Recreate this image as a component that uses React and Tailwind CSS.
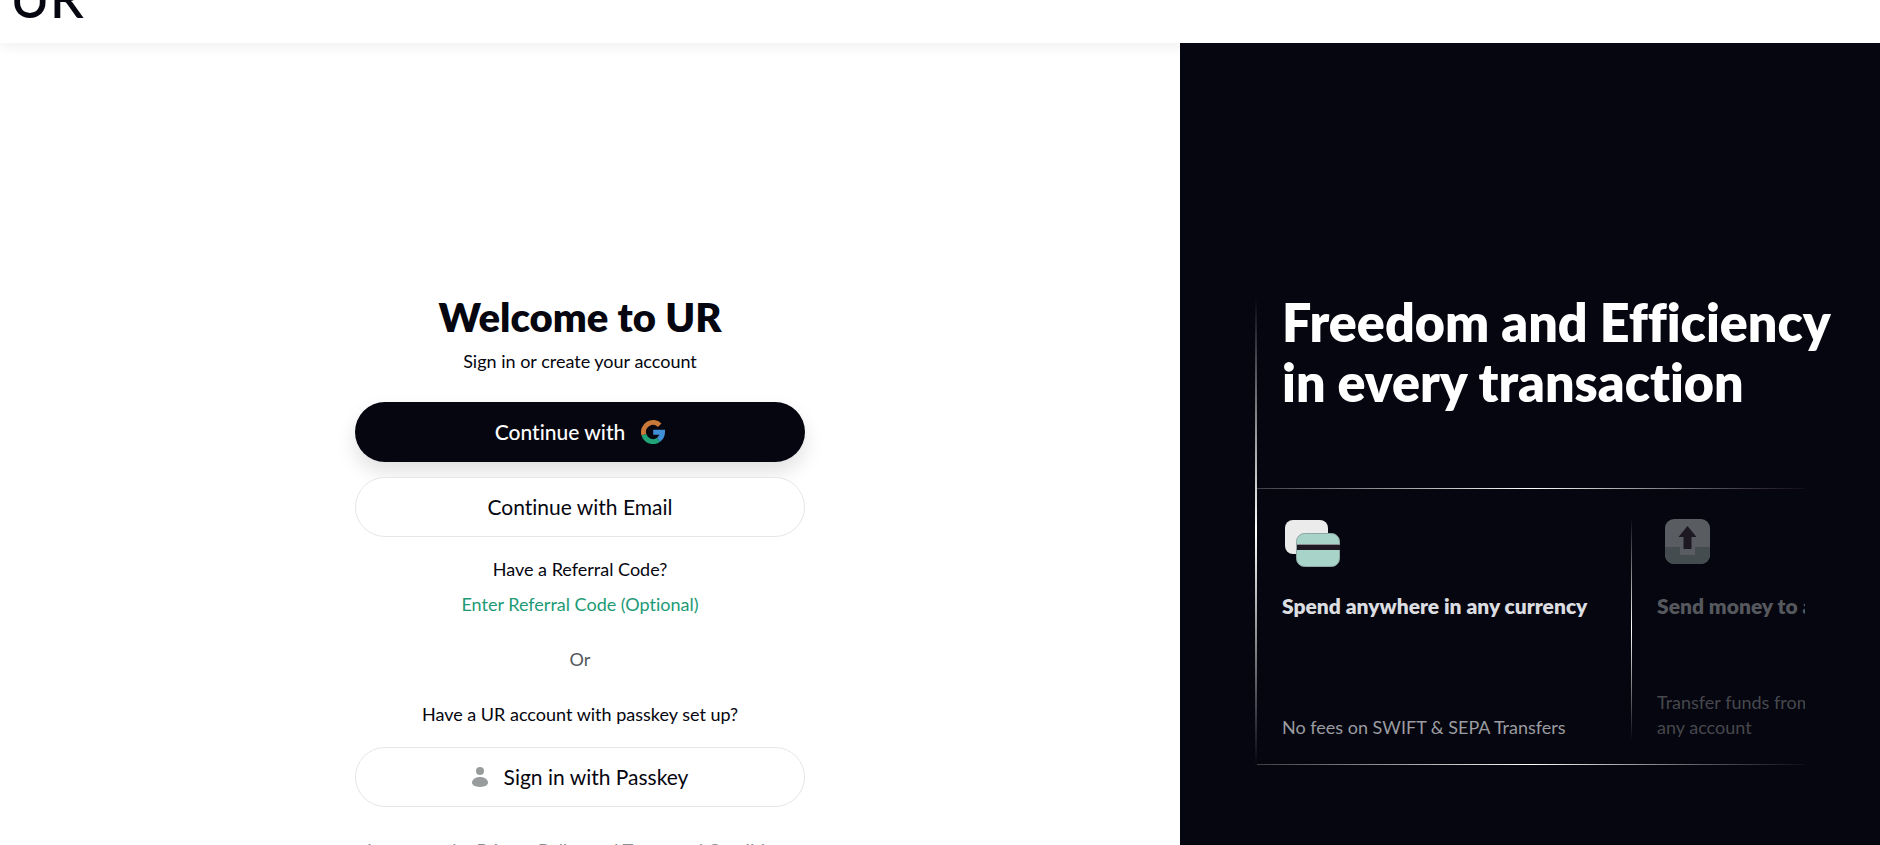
const features = [
  {
    title: 'Spend anywhere in any currency',
    text: 'No fees on SWIFT & SEPA Transfers',
    icon: CardsIcon,
    titleClass: 'text-[#dcdde0]',
    textClass: 'text-[#9b9ca1]',
  },
  {
    title: 'Send money to anyone',
    text: 'Transfer funds from\nany account',
    icon: SendIcon,
    titleClass: 'text-[#55585d]',
    textClass: 'text-[#47484d]',
  },
];

function GoogleIcon() {
  return (
    <svg className="size-6" viewBox="0 0 24 24" fill="none" strokeWidth="5" aria-hidden="true">
      <path d="M2.9 14.8A9.5 9.5 0 0 1 18.7 5.3" stroke="#c8793a" />
      <path d="M2.9 14.8A9.5 9.5 0 0 0 17.6 19.8" stroke="#1fa377" />
      <path d="M17.6 19.8A9.5 9.5 0 0 0 21.5 12.3H12.2" stroke="#3f8fd6" />
    </svg>
  );
}

function PersonIcon() {
  return (
    <svg className="h-5 w-4" viewBox="0 0 16 20" fill="#989c9d" aria-hidden="true">
      <circle cx="8" cy="4" r="4" />
      <path d="M8 10c4.600 0 8 2.600 8 5.600 0 2.800-3 4.400-8 4.400s-8-1.600-8-4.400C0 12.600 3.400 10 8 10z" />
    </svg>
  );
}

function CardsIcon() {
  return (
    <svg className="h-14 w-16" viewBox="0 0 64 56" aria-hidden="true">
      <rect x="3" y="3" width="43" height="34" rx="8" fill="#ebebeb" />
      <rect x="14.500" y="16.500" width="43" height="33" rx="8" fill="#a7d3c8" stroke="#8fa5a3" strokeWidth="1" />
      <rect x="15" y="27" width="43" height="1" fill="#8a8d92" />
      <rect x="15" y="28" width="43" height="5" fill="#1d1822" />
    </svg>
  );
}

function SendIcon() {
  return (
    <svg className="h-14 w-16" viewBox="0 0 64 56" aria-hidden="true">
      <rect x="8" y="2" width="45" height="45" rx="9" fill="#595c61" />
      <path d="M8 30h15v8h15v-8h15v8a9 9 0 0 1-9 9H17a9 9 0 0 1-9-9z" fill="#454c4f" />
      <path d="M30.500 9l9 11h-5v12h-8V20h-5z" fill="#1d1822" />
    </svg>
  );
}

function OutlineButton({ children }) {
  return (
    <button
      type="button"
      className="flex h-15 w-full items-center justify-center gap-4 rounded-full border border-[#e6e6e6] bg-white text-[21px]"
    >
      {children}
    </button>
  );
}

function Rule() {
  return <div className="h-px bg-linear-to-r from-[#3c4146] via-white to-[#120d18]" />;
}

export default function App() {
  return (
    <div className="flex h-screen flex-col overflow-hidden bg-white font-[Lato,sans-serif] text-lg leading-6 text-[#05060f] [font-variant-ligatures:none]">
      {/* header, half scrolled out of view */}
      <header className="relative -mt-[47px] flex h-[90px] shrink-0 items-center bg-white px-2.5 shadow-[0_4px_12px_rgba(0,0,0,0.06)]">
        <a href="#" className="text-[54px] font-medium">UR</a>
      </header>

      <div className="relative flex min-h-0 flex-1">
        {/* sign in */}
        <main className="min-w-0 flex-1 pt-[250px] pr-5">
          <div className="mx-auto w-[450px] text-center">
            <h1 className="text-[40px] leading-12 font-extrabold">Welcome to UR</h1>
            <p className="mt-2">Sign in or create your account</p>

            <div className="mt-[29px] flex flex-col gap-[15px]">
              <button
                type="button"
                className="flex h-15 w-full items-center justify-center gap-4 rounded-full bg-[#05060f] text-[21px] font-medium text-white shadow-[0_10px_20px_rgba(0,0,0,0.12)]"
              >
                Continue with
                <GoogleIcon />
              </button>
              <OutlineButton>Continue with Email</OutlineButton>
            </div>

            <p className="mt-5">Have a Referral Code?</p>
            <button type="button" className="mt-[11px] text-[#1c9a76]">Enter Referral Code (Optional)</button>
            <p className="mt-[31px] text-[#55585d]">Or</p>
            <p className="mt-[31px] mb-[21px]">Have a UR account with passkey set up?</p>
            <OutlineButton>
              <PersonIcon />
              Sign in with Passkey
            </OutlineButton>

            <p className="mt-[31px] whitespace-nowrap text-[#8a8d92]">
              I agree to the <a href="#">Privacy Policy</a> and <a href="#">Terms and Conditions</a>
            </p>
          </div>
        </main>

        {/* promo */}
        <aside className="w-[700px] shrink-0 bg-[#05060f] px-[75px] pt-[249px]">
          <div className="flex">
            <div className="mt-1.5 w-0.5 shrink-0 bg-linear-to-b from-transparent via-white to-transparent" />
            <div className="min-w-0 flex-1">
              <h2 className="pb-[76px] pl-[25px] text-[52px] leading-15 font-extrabold whitespace-nowrap text-white">
                Freedom and Efficiency
                <br />
                in every transaction
              </h2>
              <Rule />
              <div className="flex overflow-hidden pt-7 pb-6">
                {features.map(({ title, text, icon: Icon, titleClass, textClass }, i) => (
                  <div key={title} className="flex shrink-0">
                    {i > 0 && (
                      <div className="w-px bg-linear-to-b from-transparent via-white to-transparent" />
                    )}
                    <div className="flex h-[223px] w-[374px] flex-col pl-[25px]">
                      <Icon />
                      <h3 className={`mt-[19px] text-[21px] leading-7 font-extrabold ${titleClass}`}>{title}</h3>
                      <p className={`mt-auto leading-[25px] whitespace-pre-line ${textClass}`}>{text}</p>
                    </div>
                  </div>
                ))}
              </div>
              <Rule />
            </div>
          </div>
        </aside>
      </div>
    </div>
  );
}
